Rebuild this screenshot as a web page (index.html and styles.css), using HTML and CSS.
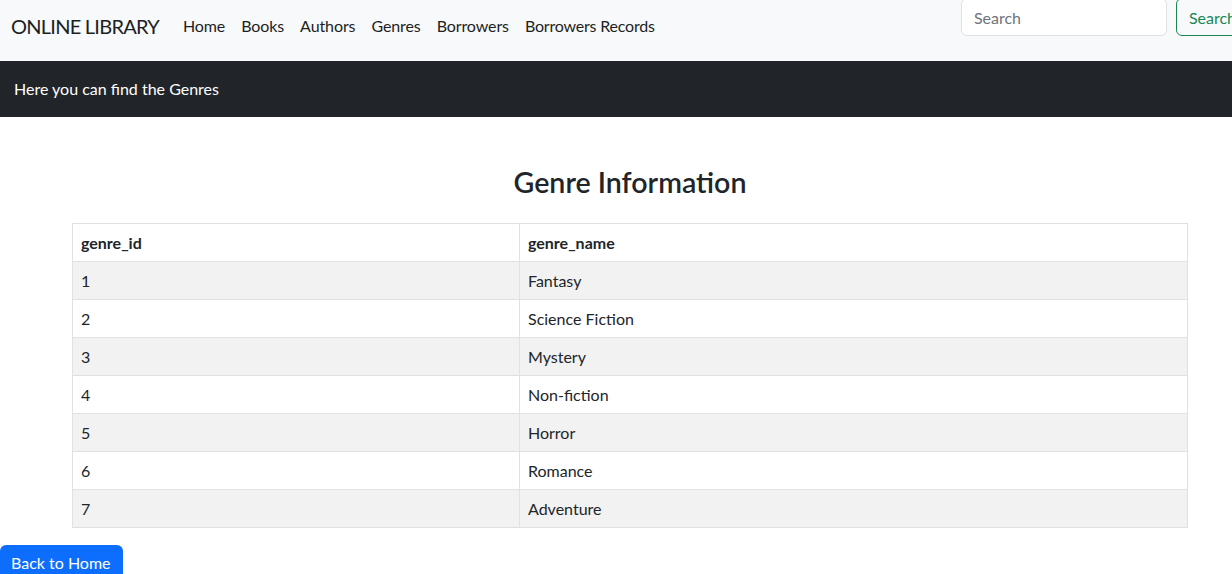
FILE: index.html
```html
<!DOCTYPE html>
<html lang="en">
<head>
<meta charset="utf-8">
<title>Genres - Online Library</title>
<link rel="stylesheet" href="styles.css">
</head>
<body>
<nav class="navbar">
  <a class="brand" href="#">ONLINE LIBRARY</a>
  <ul class="nav-links">
    <li><a href="#">Home</a></li>
    <li><a href="#">Books</a></li>
    <li><a href="#">Authors</a></li>
    <li><a href="#">Genres</a></li>
    <li><a href="#">Borrowers</a></li>
    <li><a class="tight" href="#">Borrowers Records</a></li>
  </ul>
  <form class="search-form">
    <input class="search-input" type="search" placeholder="Search">
    <button class="search-btn" type="button">Search</button>
  </form>
</nav>
<div class="banner">Here you can find the Genres</div>
<main class="container">
  <h3 class="title">Genre Information</h3>
  <table class="genre-table">
    <thead>
      <tr><th class="col-id">genre_id</th><th>genre_name</th></tr>
    </thead>
    <tbody>
      <tr><td>1</td><td>Fantasy</td></tr>
      <tr><td>2</td><td>Science Fiction</td></tr>
      <tr><td>3</td><td>Mystery</td></tr>
      <tr><td>4</td><td>Non-fiction</td></tr>
      <tr><td>5</td><td>Horror</td></tr>
      <tr><td>6</td><td>Romance</td></tr>
      <tr><td>7</td><td>Adventure</td></tr>
    </tbody>
  </table>
</main>
<a class="back-btn" href="#">Back to Home</a>
</body>
</html>
```
FILE: styles.css
```css
html {
  overflow-x: hidden;
}
body {
  margin: 0;
  min-width: 1260px;
  font-family: Lato, "Noto Sans", sans-serif;
  font-size: 16px;
  line-height: 1.5;
  color: #212529;
  background: #fff;
}
a {
  text-decoration: none;
}
.navbar {
  display: flex;
  align-items: flex-start;
  height: 61px;
  padding: 0 11px 0 11px;
  background: #f8f9fa;
  box-sizing: border-box;
}
.brand {
  margin-top: 11px;
  margin-right: 16px;
  font-size: 20px;
  letter-spacing: -0.75px;
  line-height: 30px;
  color: #1c1f23;
}
.nav-links {
  display: flex;
  list-style: none;
  margin: 6px 0 0 0;
  padding: 0;
}
.nav-links a {
  display: block;
  padding: 8px 8px;
  line-height: 24px;
  color: #1c1f23;
  letter-spacing: -0.1px;
}
.nav-links a.tight {
  letter-spacing: -0.2px;
}
.search-form {
  display: flex;
  margin-left: auto;
  margin-top: -2px;
}
.search-input {
  width: 206px;
  height: 38px;
  box-sizing: border-box;
  padding: 6px 12px;
  border: 1px solid #dee2e6;
  border-radius: 6px;
  background: #fff;
  font-family: inherit;
  font-size: 16px;
  color: #212529;
  margin-right: 9px;
}
.search-input::placeholder {
  color: #6c757d;
}
.search-btn {
  height: 38px;
  padding: 6px 12px;
  border: 1px solid #198754;
  border-radius: 6px;
  background: transparent;
  color: #198754;
  font-family: inherit;
  font-size: 16px;
}
.banner {
  background: #212529;
  color: #fff;
  padding: 16px 14px;
  line-height: 24px;
}
.container {
  max-width: 1116px;
  margin: 0 auto;
  padding: 0 12px;
}
.title {
  text-align: center;
  font-size: 28.6px;
  font-weight: 600;
  line-height: 34px;
  margin: 48px 0 24px;
}
.genre-table {
  width: 100%;
  border-collapse: collapse;
  margin-bottom: 17px;
}
.genre-table th,
.genre-table td {
  border: 1px solid #dee2e6;
  padding: 7px 8px;
  line-height: 23px;
  text-align: left;
  vertical-align: top;
}
.genre-table th {
  font-weight: 700;
}
.col-id {
  width: 430px;
}
.genre-table tbody tr:nth-child(odd) td {
  background: #f2f2f2;
}
.back-btn {
  display: inline-block;
  padding: 6px 12px 6px 11px;
  line-height: 24px;
  background: #0d6efd;
  color: #fff;
  border-radius: 6px 6px 0 0;
}
```
